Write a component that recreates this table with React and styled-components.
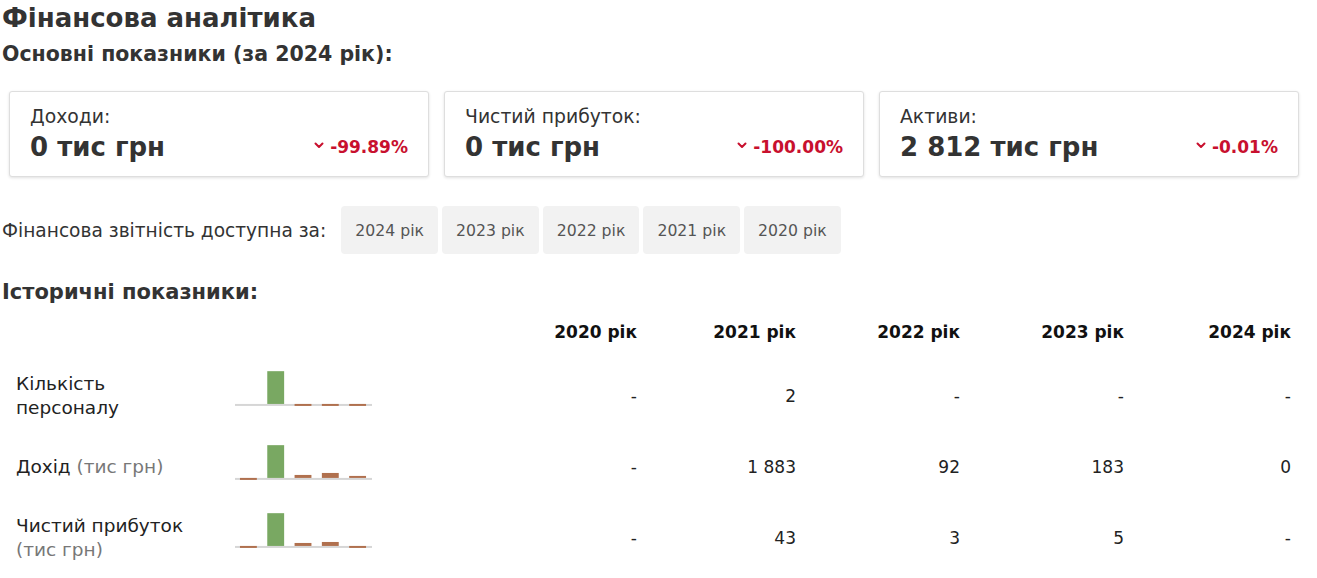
import React from "react";
import styled, { createGlobalStyle } from "styled-components";

const GlobalStyle = createGlobalStyle`
  body {
    margin: 0;
    background: #ffffff;
    color: #333333;
    font-family: "DejaVu Sans", "Liberation Sans", sans-serif;
  }
`;

const FONT = `"DejaVu Sans", "Liberation Sans", sans-serif`;

const cards = [
  { label: "Доходи:", value: "0 тис грн", change: "-99.89%" },
  { label: "Чистий прибуток:", value: "0 тис грн", change: "-100.00%" },
  { label: "Активи:", value: "2 812 тис грн", change: "-0.01%" },
];

const years = ["2024 рік", "2023 рік", "2022 рік", "2021 рік", "2020 рік"];
const headYears = ["2020 рік", "2021 рік", "2022 рік", "2023 рік", "2024 рік"];

// bar heights in px, negative goes below the baseline
const rows = [
  {
    label: "Кількість персоналу",
    unit: null,
    bars: [0, 33, -2, -2, -2],
    values: ["-", "2", "-", "-", "-"],
  },
  {
    label: "Дохід",
    unit: "(тис грн)",
    bars: [-2, 33, 3, 5, 2],
    values: ["-", "1 883", "92", "183", "0"],
  },
  {
    label: "Чистий прибуток",
    unit: "(тис грн)",
    bars: [-2, 33, 3, 4, -2],
    values: ["-", "43", "3", "5", "-"],
    wrapUnit: true,
  },
];

function Chevron() {
  return (
    <svg width="10" height="7" viewBox="0 0 10 7">
      <path
        d="M1.5 1.5 L5 5 L8.5 1.5"
        fill="none"
        stroke="#c8102e"
        strokeWidth="2"
        strokeLinecap="round"
        strokeLinejoin="round"
      />
    </svg>
  );
}

function Spark({ bars, base }) {
  return (
    <svg width="138" height="50" viewBox="0 0 138 50">
      <rect x="0" y={base} width="138" height="2" fill="#d6d6d6" />
      {bars.map((h, i) => {
        const x = 5 + i * 27.5;
        const green = h > 10;
        const y = h >= 0 ? base - h : base;
        return (
          <rect
            key={i}
            x={x}
            y={y}
            width="17"
            height={Math.abs(h)}
            fill={green ? "#79a862" : "#b0704e"}
          />
        );
      })}
    </svg>
  );
}

export default function App() {
  return (
    <Page>
      <GlobalStyle />
      <Title>Фінансова аналітика</Title>
      <SubTitle>Основні показники (за 2024 рік):</SubTitle>

      <Cards>
        {cards.map((c) => (
          <Card key={c.label}>
            <CardLabel>{c.label}</CardLabel>
            <CardRow>
              <CardValue>{c.value}</CardValue>
              <Change>
                <Chevron />
                {c.change}
              </Change>
            </CardRow>
          </Card>
        ))}
      </Cards>

      <Available>
        <AvailableLabel>Фінансова звітність доступна за:</AvailableLabel>
        <YearButtons>
          {years.map((y) => (
            <YearButton key={y}>{y}</YearButton>
          ))}
        </YearButtons>
      </Available>

      <SectionTitle>Історичні показники:</SectionTitle>

      <Table>
        <HeadRow>
          <span />
          <span />
          {headYears.map((y) => (
            <HeadCell key={y}>{y}</HeadCell>
          ))}
        </HeadRow>
        {rows.map((r, idx) => (
          <Row key={r.label}>
            <RowLabel>
              {r.label}
              {r.unit && (
                <>
                  {r.wrapUnit ? <br /> : " "}
                  <Unit>{r.unit}</Unit>
                </>
              )}
            </RowLabel>
            <ChartCell>
              <Spark bars={r.bars} base={idx === 1 ? 36 : 33} />
            </ChartCell>
            {r.values.map((v, i) => (
              <ValueCell key={i}>{v}</ValueCell>
            ))}
          </Row>
        ))}
      </Table>
    </Page>
  );
}

const Page = styled.div`
  padding: 0 2px;
  width: 1313px;
  font-family: ${FONT};
`;

const Title = styled.h1`
  margin: 0;
  padding-top: 1px;
  font-size: 26px;
  line-height: 34px;
  font-weight: 700;
  color: #333333;
`;

const SubTitle = styled.h2`
  margin: 7px 0 0;
  font-size: 20.5px;
  line-height: 24px;
  font-weight: 700;
  color: #333333;
`;

const Cards = styled.div`
  display: grid;
  grid-template-columns: repeat(3, 420px);
  gap: 15px;
  margin: 25px 0 0 7px;
`;

const Card = styled.div`
  height: 86px;
  box-sizing: border-box;
  padding: 14px 20px 0 20px;
  border: 1px solid #dedede;
  border-radius: 3px;
  box-shadow: 0 1px 3px rgba(0, 0, 0, 0.12);
  background: #fff;
`;

const CardLabel = styled.div`
  font-size: 18.8px;
  line-height: 22px;
  font-weight: 400;
  color: #333;
`;

const CardRow = styled.div`
  display: flex;
  align-items: center;
  justify-content: space-between;
  margin-top: 4px;
`;

const CardValue = styled.div`
  font-size: 26px;
  line-height: 30px;
  font-weight: 700;
  color: #333;
`;

const Change = styled.div`
  display: flex;
  align-items: center;
  gap: 6px;
  font-size: 17px;
  font-weight: 700;
  color: #c8102e;
  svg {
    margin-top: -3px;
  }
`;

const Available = styled.div`
  display: flex;
  align-items: center;
  gap: 15px;
  margin-top: 29px;
`;

const AvailableLabel = styled.span`
  font-size: 18.6px;
  color: #333;
`;

const YearButtons = styled.div`
  display: flex;
  gap: 4px;
`;

const YearButton = styled.div`
  height: 48px;
  padding: 0 14px;
  display: flex;
  align-items: center;
  background: #f2f2f2;
  border-radius: 4px;
  font-size: 15.7px;
  color: #555;
`;

const SectionTitle = styled.h3`
  margin: 26px 0 0;
  font-size: 21px;
  line-height: 24px;
  font-weight: 700;
  color: #333;
`;

const Table = styled.div`
  margin-top: 12px;
  padding-left: 14px;
`;

const grid = `
  display: grid;
  grid-template-columns: 219px 137px 265px 159px 164px 164px 167px;
  align-items: center;
`;

const HeadRow = styled.div`
  ${grid};
  height: 32px;
  margin-bottom: 12px;
`;

const HeadCell = styled.div`
  text-align: right;
  font-size: 17px;
  font-weight: 700;
  color: #111;
`;

const Row = styled.div`
  ${grid};
  height: 71px;
`;

const RowLabel = styled.div`
  font-size: 18.5px;
  line-height: 24px;
  color: #222;
  width: 180px;
`;

const Unit = styled.span`
  color: #777;
`;

const ChartCell = styled.div`
  display: flex;
  align-items: center;
`;

const ValueCell = styled.div`
  text-align: right;
  font-size: 17px;
  font-weight: 400;
  color: #222;
`;
